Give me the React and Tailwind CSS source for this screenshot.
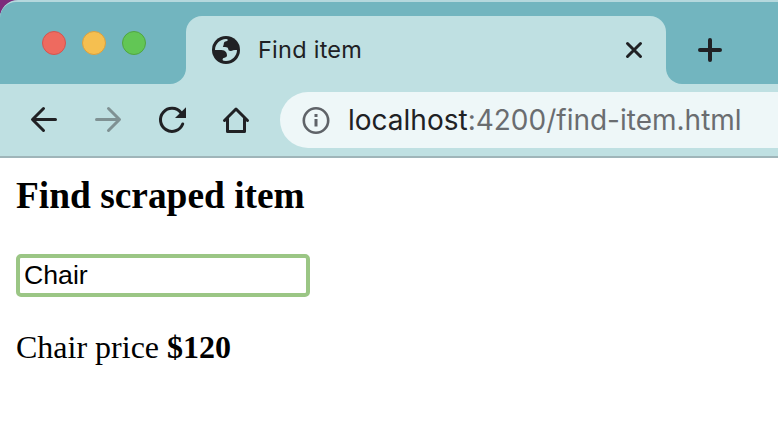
const ink = "#202124";

function Globe() {
  return (
    <svg width="28" height="28" viewBox="0 0 28 28" className="shrink-0">
      <circle cx="14" cy="14" r="14" fill={ink} />
      <path
        fill="#bfe0e2"
        d="M3 14C3 8 8 3 14 3Q15.800 3 15.800 4Q15.500 5.200 14 5.200Q11.800 5.500 11.800 7.500Q11.800 9.500 10.800 10.500Q11 11 13 11Q16.200 11 16.200 13Q16.200 15 18.500 15Q20.500 15 21 14.200Q21.500 13.800 25 14C25 20 20 25 14 25Q11 25 10.500 24Q10.500 21.800 12.500 21.800Q15 21.500 15 19.500Q15 17.500 14 16Q12.500 14 9.500 14Z"
      />
    </svg>
  );
}

function TabStrip() {
  return (
    <header className="flex h-[84px] items-end rounded-tl-[18px] border-t-2 border-[#b5d8dd] bg-[#72b5bf]">
      <div className="flex h-full w-[186px] shrink-0 items-end rounded-tl-[16px] bg-[#bfe0e2]">
        <div className="flex h-full w-full items-center gap-4 rounded-tl-[16px] rounded-br-[16px] bg-[#72b5bf] pl-[42px]">
          <i className="size-6 rounded-full border border-[#d35550] bg-[#ee6a5f]" />
          <i className="size-6 rounded-full border border-[#d9a040] bg-[#f5bf50]" />
          <i className="size-6 rounded-full border border-[#51a541] bg-[#62c655]" />
        </div>
      </div>
      <div className="flex h-[68px] w-[480px] shrink-0 items-center rounded-t-[16px] bg-[#bfe0e2] pr-[23px] pl-[26px]">
        <Globe />
        <span className="ml-[18px] font-['Inter'] text-[23.500px] tracking-[0.250px] text-[#202124]">Find item</span>
        <svg width="18" height="18" viewBox="0 0 18 18" className="ml-auto" stroke={ink} strokeWidth="3" strokeLinecap="round">
          <path d="M2.500 2.500l13 13M15.500 2.500l-13 13" />
        </svg>
      </div>
      <div className="h-[68px] flex-1 bg-[linear-gradient(#72b5bf_50%,#bfe0e2_50%)]">
        <div className="flex h-full items-center rounded-bl-[16px] bg-[#72b5bf] pl-8">
          <svg width="24" height="24" viewBox="0 0 24 24" stroke={ink} strokeWidth="4" strokeLinecap="round">
            <path d="M12 2v20M2 12h20" />
          </svg>
        </div>
      </div>
    </header>
  );
}

function Toolbar() {
  return (
    <nav className="flex h-[74px] items-center border-b-2 border-[#9fb5b9] bg-[#bfe0e2] pl-7">
      <svg width="32" height="32" viewBox="0 0 32 32" className="shrink-0" fill="none" stroke={ink} strokeWidth="3" strokeLinecap="round" strokeLinejoin="round">
        <path d="M27.500 15.500H5M15.500 4.500l-11 11 11 11" />
      </svg>
      <svg width="32" height="32" viewBox="0 0 32 32" className="ml-8 shrink-0" fill="none" stroke="#7f9193" strokeWidth="3" strokeLinecap="round" strokeLinejoin="round">
        <path d="M4.500 15.500H27M16.500 4.500l11 11-11 11" />
      </svg>
      <svg width="32" height="32" viewBox="0 0 32 32" className="ml-8 shrink-0" fill="none" stroke={ink} strokeWidth="3" strokeLinecap="round">
        <path d="M26.700 20A11.500 11.500 0 1 1 25 8.700" />
        <path d="M30 3.300V14H19z" fill={ink} stroke="none" />
      </svg>
      <svg width="32" height="32" viewBox="0 0 32 32" className="ml-8 shrink-0" fill="none" stroke={ink} strokeWidth="3" strokeLinejoin="round" strokeLinecap="round">
        <path d="M4.500 16.500L16 5 27.500 16.500M7.500 14.500v13h17v-13" />
      </svg>
      <div className="ml-7 flex h-14 flex-1 items-center rounded-l-full bg-[#eef7f8] pl-[22px]">
        <svg width="28" height="28" viewBox="0 0 28 28" className="shrink-0" fill="none" stroke="#5f6368" strokeWidth="2.600">
          <circle cx="14" cy="14.500" r="12.200" />
          <path d="M14 13v7.500M14 8v3" strokeWidth="3" />
        </svg>
        <span className="ml-[18px] font-['Inter'] text-[28px] whitespace-nowrap text-[#6a6d70]">
          <span className="text-[#202124]">localhost</span>:4200/find-item.html
        </span>
      </div>
    </nav>
  );
}

export default function App() {
  return (
    <div className="h-[422px] w-[778px] overflow-hidden bg-white">
      <div className="bg-[#7d2b7b]">
        <TabStrip />
      </div>
      <Toolbar />
      <main className="px-4 text-black">
        <h3 className="pt-4 font-['Liberation_Serif'] text-[37.400px] leading-[44px] font-bold">Find scraped item</h3>
        <input
          defaultValue="Chair"
          className="mt-9 block h-[43px] w-[294px] rounded-[5px] border-4 border-[#9bc685] px-1 font-['Liberation_Sans'] text-[26.670px] outline-none"
        />
        <p className="mt-8 font-['Liberation_Serif'] text-[32px] leading-9">
          Chair price <b>$120</b>
        </p>
      </main>
    </div>
  );
}
